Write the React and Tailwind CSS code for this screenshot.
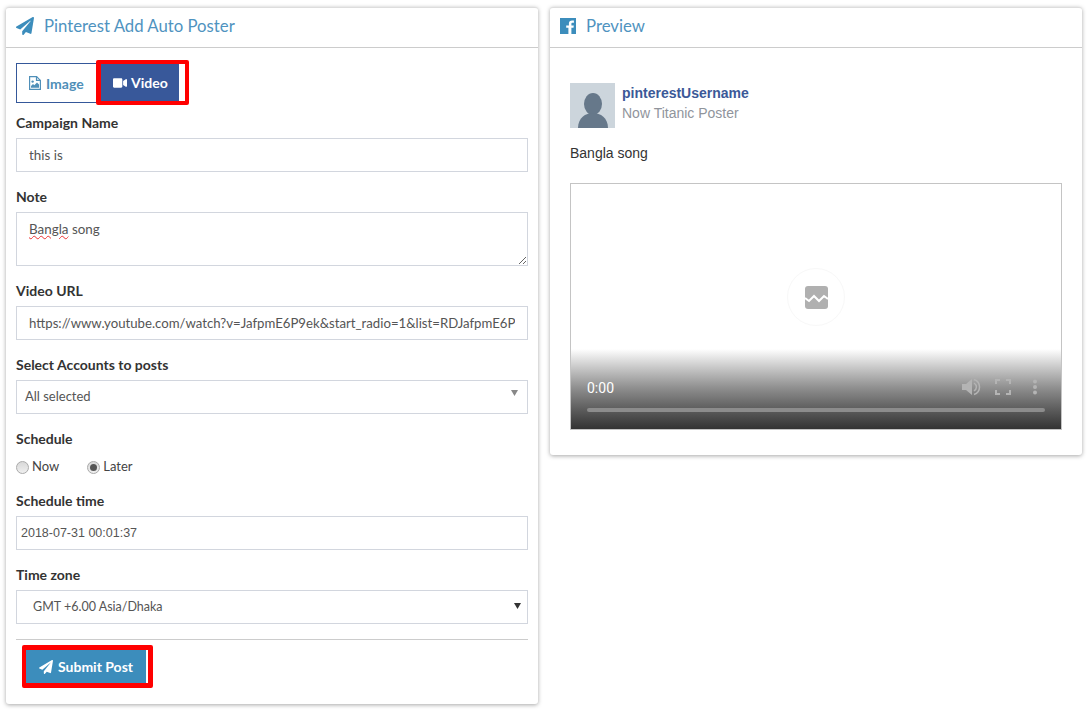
import { FaPaperPlane, FaVideo } from "react-icons/fa"

const inputClass =
  "block w-full h-[34px] border border-[#d2d6de] px-3 text-[13.4px] text-[#555] bg-white outline-none font-['Lato',sans-serif]"

function Label({ children }) {
  return <label className="block h-[15px] leading-[15px] mb-[8px] text-[14px] font-bold text-[#333]">{children}</label>
}

function Radio({ checked, label, className }) {
  return (
    <span className={`flex items-center ${className || ""}`}>
      <span className="w-[13px] h-[13px] rounded-full border border-[#aaa] bg-gradient-to-b from-[#d8d8d8] to-[#efefef] flex items-center justify-center">
        {checked && <span className="w-[7px] h-[7px] rounded-full bg-[#555]" />}
      </span>
      <span className="ml-[3px] text-[13px] text-[#444]">{label}</span>
    </span>
  )
}

function Caret({ className }) {
  return (
    <svg className={`absolute ${className}`} width="7" height="6" viewBox="0 0 7 6">
      <path d="M0 0h7L3.5 6z" fill="currentColor" />
    </svg>
  )
}

function FileImageIcon() {
  return (
    <svg width="12" height="14" viewBox="0 0 12 14">
      <path d="M.6.6h7l3.8 3.8v9H.6z" fill="none" stroke="currentColor" strokeWidth="1.2" />
      <path d="M7.5.6v3.8h3.9" fill="none" stroke="currentColor" strokeWidth="1.2" />
      <circle cx="3.6" cy="5.6" r="1.2" fill="currentColor" />
      <path d="M2 11.8V10l2-2 1.3 1.3L8 6.5l2 2v3.3z" fill="currentColor" />
    </svg>
  )
}

function FacebookIcon() {
  return (
    <svg width="16" height="16" viewBox="0 0 16 16">
      <path
        d="M0 0h16v16h-4.6V9.8h2.1l.3-2.4h-2.4V5.9c0-.7.2-1.2 1.2-1.2h1.3V2.5c-.2 0-1-.1-1.9-.1-1.9 0-3.1 1.1-3.1 3.2v1.8H6.2v2.4h2.2V16H0z"
        fill="currentColor"
      />
    </svg>
  )
}

function CardHeader({ icon, title }) {
  return (
    <div className="h-[40px] border-b border-[#ccc] flex items-center pl-[10px] pb-[3px] text-[#3c8dbc] shrink-0">
      {icon}
      <h3 className="ml-[10px] text-[16.75px] font-normal text-[#4f93c0]">{title}</h3>
    </div>
  )
}

function VideoPreview() {
  return (
    <div className="relative h-[247px] border border-[#c4c4c4] bg-white">
      <div className="absolute left-[216px] top-[84px] w-[58px] h-[58px] rounded-full border border-[#f8f8f8] flex items-center justify-center">
        <svg width="23" height="23" viewBox="0 0 23 23">
          <rect width="23" height="23" rx="3" fill="#b0b0b0" />
          <path d="M0 12l4 3 5-5 5 5 5-5 4 3" fill="none" stroke="#fff" strokeWidth="2" />
        </svg>
      </div>
      <div className="absolute left-0 right-0 bottom-0 h-[80px] bg-gradient-to-b from-white via-[#8c8c8c] via-50% to-[#333]" />
      <span className="absolute left-[16px] top-[196px] text-[14px] leading-[16px] text-white font-['Roboto',sans-serif]">0:00</span>
      <svg className="absolute left-[390px] top-[193px]" width="20" height="20" viewBox="0 0 20 20">
        <path d="M1 7v6h4l6 5V2L5 7z" fill="#b4b4b4" />
        <path d="M13 6c1.500 1 2.400 2.400 2.400 4s-.9 3-2.400 4M13 2.500c3 1 5.500 4 5.500 7.500s-2.500 6.500-5.500 7.500" fill="none" stroke="#b4b4b4" strokeWidth="1.500" />
      </svg>
      <svg className="absolute left-[424px] top-[195px]" width="16" height="16" viewBox="0 0 16 16">
        <path d="M1 5V1h4M11 1h4v4M15 11v4h-4M5 15H1v-4" fill="none" stroke="#b4b4b4" strokeWidth="2" />
      </svg>
      <svg className="absolute left-[461px] top-[195px]" width="6" height="16" viewBox="0 0 6 16">
        <circle cx="3" cy="2.500" r="2" fill="#b4b4b4" />
        <circle cx="3" cy="8" r="2" fill="#b4b4b4" />
        <circle cx="3" cy="13.500" r="2" fill="#b4b4b4" />
      </svg>
      <div className="absolute left-[16px] right-[16px] top-[224px] h-[4px] rounded-sm bg-[#8c8c8c]" />
    </div>
  )
}

export default function App() {
  return (
    <div className="min-h-[727px] bg-white pt-[7px] px-[6px] flex items-start gap-[12px] font-['Lato',sans-serif]">
      {/* Add poster form */}
      <div className="w-[532px] h-[697px] bg-white rounded-[3px] border-t border-[#ddd] shadow-[0_1px_4px_rgba(0,0,0,0.35)] flex flex-col">
        <CardHeader icon={<FaPaperPlane size={18} />} title="Pinterest Add Auto Poster" />
        <div className="px-[10px] pt-[12px]">
          <div className="flex h-[45px] items-start mb-[10px]">
            <div className="mt-[3px] w-[84px] h-[40px] border border-[#35589a] flex items-center pl-[12px] text-[14px] font-bold text-[#4f8fb8]">
              <FileImageIcon />
              <span className="ml-[5px]">Image</span>
            </div>
            <div className="-ml-[4px] relative w-[93px] h-[45px] border-4 border-l-[5px] border-[#f00] rounded-[2px] bg-white pr-[6px]">
              <div className="h-full bg-[#38589a] flex items-center pl-[12px] text-[14px] font-bold text-white">
                <FaVideo size={14} />
                <span className="ml-[4px]">Video</span>
              </div>
            </div>
          </div>

          <Label>Campaign Name</Label>
          <input readOnly value="this is" className={inputClass} />

          <div className="mt-[17px]">
            <Label>Note</Label>
            <div className="h-[54px] border border-[#d2d6de] px-3 py-[6px] text-[13.4px] text-[#555] resize-y overflow-auto">
              <span className="underline decoration-wavy decoration-[#e33] decoration-1">Bangla</span> song
            </div>
          </div>

          <div className="mt-[17px]">
            <Label>Video URL</Label>
            <input
              readOnly
              value="https://www.youtube.com/watch?v=JafpmE6P9ek&start_radio=1&list=RDJafpmE6P9ek"
              className={`${inputClass} !text-[13.2px]`}
            />
          </div>

          <div className="mt-[17px]">
            <Label>Select Accounts to posts</Label>
            <div className="relative">
              <select className={`${inputClass} appearance-none !px-2 !text-[13px]`} defaultValue="all">
                <option value="all">All selected</option>
              </select>
              <Caret className="right-[10px] top-[10px] text-[#888]" />
            </div>
          </div>

          <div className="mt-[17px]">
            <Label>Schedule</Label>
            <div className="flex h-[20px] items-center mt-[11px]">
              <Radio label="Now" />
              <Radio checked label="Later" className="ml-[28px]" />
            </div>
          </div>

          <div className="mt-[16px]">
            <Label>Schedule time</Label>
            <input readOnly value="2018-07-31 00:01:37" className={`${inputClass} !px-1 !text-[12.5px] font-['Liberation_Sans',sans-serif]`} />
          </div>

          <div className="mt-[17px]">
            <Label>Time zone</Label>
            <div className="relative">
              <select className={`${inputClass} appearance-none !pl-4 !text-[12.5px]`} defaultValue="dhaka">
                <option value="dhaka">GMT +6.00 Asia/Dhaka</option>
              </select>
              <Caret className="right-[7px] top-[13px] text-[#333]" />
            </div>
          </div>

          <div className="border-t border-[#ccc] mt-[15px] pt-[5px] pl-[6px]">
            <div className="w-[131px] h-[43px] border-4 border-y-[5px] border-r-[5px] border-[#f00] rounded-[2px] pr-[2px] bg-white">
              <button className="w-full h-full bg-[#3c8dbc] flex items-center pl-[13px] text-[14px] font-bold text-white">
                <FaPaperPlane size={14} />
                <span className="ml-[5px]">Submit Post</span>
              </button>
            </div>
          </div>
        </div>
      </div>

      {/* Preview */}
      <div className="w-[532px] h-[448px] bg-white rounded-[3px] border-t border-[#ddd] shadow-[0_1px_4px_rgba(0,0,0,0.35)] flex flex-col">
        <CardHeader icon={<FacebookIcon />} title="Preview" />
        <div className="px-[20px] pt-[35px] font-['Liberation_Sans',sans-serif]">
          <div className="flex">
            <svg width="45" height="45" viewBox="0 0 45 45" className="shrink-0">
              <rect width="45" height="45" fill="#ccd5dc" />
              <ellipse cx="23" cy="21" rx="9" ry="11" fill="#66788a" />
              <path d="M8 45c0-20 30-20 30 0z" fill="#66788a" />
            </svg>
            <div className="ml-[7px]">
              <div className="text-[14px] leading-[20px] font-bold text-[#3b5998]">pinterestUsername</div>
              <div className="text-[14px] leading-[20px] text-[#90949c]">Now Titanic Poster</div>
            </div>
          </div>
          <p className="mt-[15px] mb-[20px] text-[14px] leading-[20px] text-[#333]">Bangla song</p>
          <VideoPreview />
        </div>
      </div>
    </div>
  )
}
